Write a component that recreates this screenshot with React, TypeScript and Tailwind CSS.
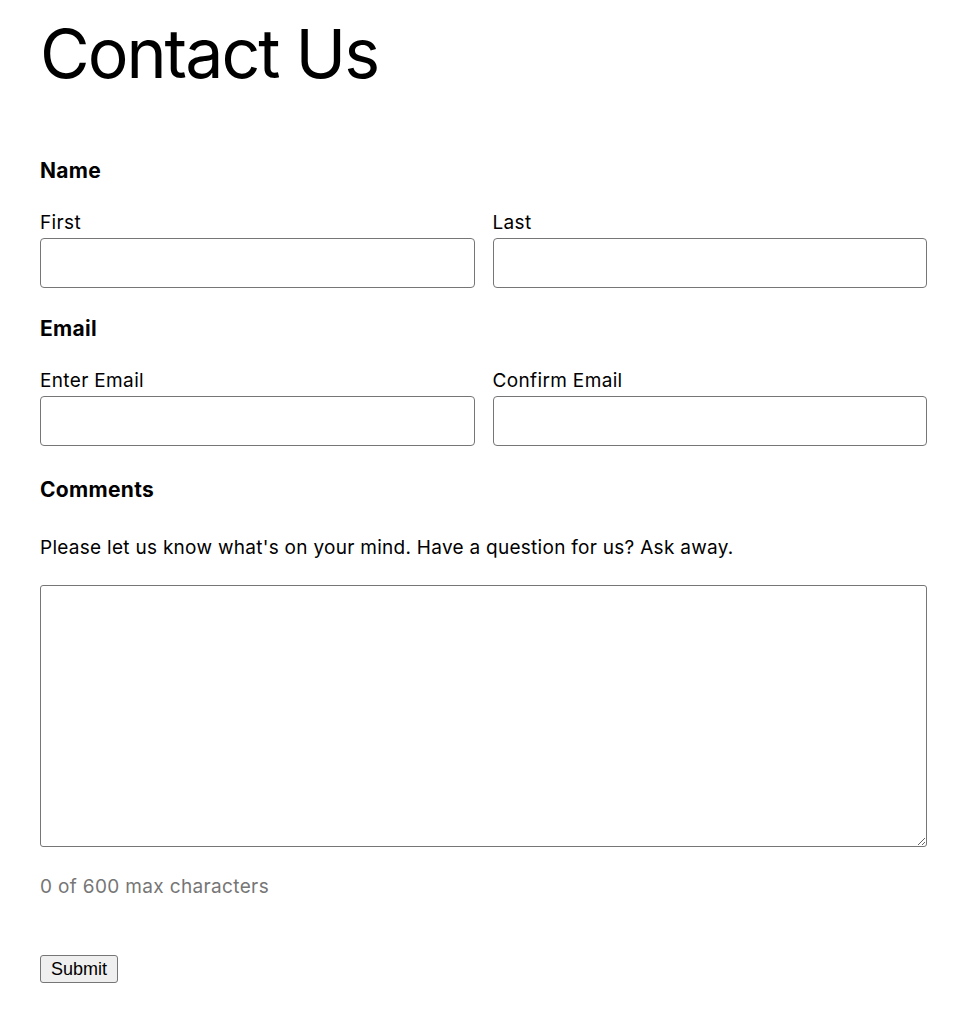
import { useState } from "react";

const font = { fontFamily: "Inter, 'Noto Sans', sans-serif" };

function Field({ label, id, type = "text" }: { label: string; id: string; type?: string }) {
  return (
    <div className="flex flex-col">
      <label htmlFor={id} className="pt-px text-[19px] leading-[22px] tracking-[0.35px] text-black">
        {label}
      </label>
      <input
        id={id}
        type={type}
        className="mt-[4px] h-[50px] w-full rounded-[4px] border border-[#767676] bg-white px-2 text-[18px] outline-none"
      />
    </div>
  );
}

export default function App() {
  const [comments, setComments] = useState("");

  return (
    <div className="min-h-[1024px] bg-white pl-10 pr-[38px] pt-[11px] text-black" style={font}>
      <h1 className="text-[68px] font-normal leading-[84px] tracking-[-2px]">Contact Us</h1>

      <form onSubmit={(e) => e.preventDefault()}>
        <h2 className="mt-[64px] text-[21px] font-bold leading-[24px] tracking-[0.3px]">Name</h2>
        <div className="mt-[28px] grid grid-cols-2 gap-[18px]">
          <Field label="First" id="first" />
          <Field label="Last" id="last" />
        </div>

        <h2 className="mt-[29px] text-[21px] font-bold leading-[24px] tracking-[0.3px]">Email</h2>
        <div className="mt-[28px] grid grid-cols-2 gap-[18px]">
          <Field label="Enter Email" id="email" type="email" />
          <Field label="Confirm Email" id="email2" type="email" />
        </div>

        <h2 className="mt-[32px] text-[21px] font-bold leading-[24px] tracking-[0.3px]">Comments</h2>
        <p className="mt-[35px] text-[19px] leading-[22px] tracking-[0.28px]">
          Please let us know what's on your mind. Have a question for us? Ask away.
        </p>
        <textarea
          maxLength={600}
          value={comments}
          onChange={(e) => setComments(e.target.value)}
          className="mt-[26px] block h-[262px] w-full rounded-[3px] border border-[#767676] bg-white p-2 text-[18px] outline-none"
        />
        <p className="mt-[29px] text-[19px] leading-[22px] tracking-[0.35px] text-[#767676]">
          {comments.length} of 600 max characters
        </p>

        <button
          type="submit"
          className="mt-[57px] h-[28px] w-[78px] rounded-[3px] border border-[#767676] bg-[#efefef] text-[18px] leading-none text-black"
          style={{ fontFamily: "'Liberation Sans', Arial, sans-serif" }}
        >
          Submit
        </button>
      </form>
    </div>
  );
}
